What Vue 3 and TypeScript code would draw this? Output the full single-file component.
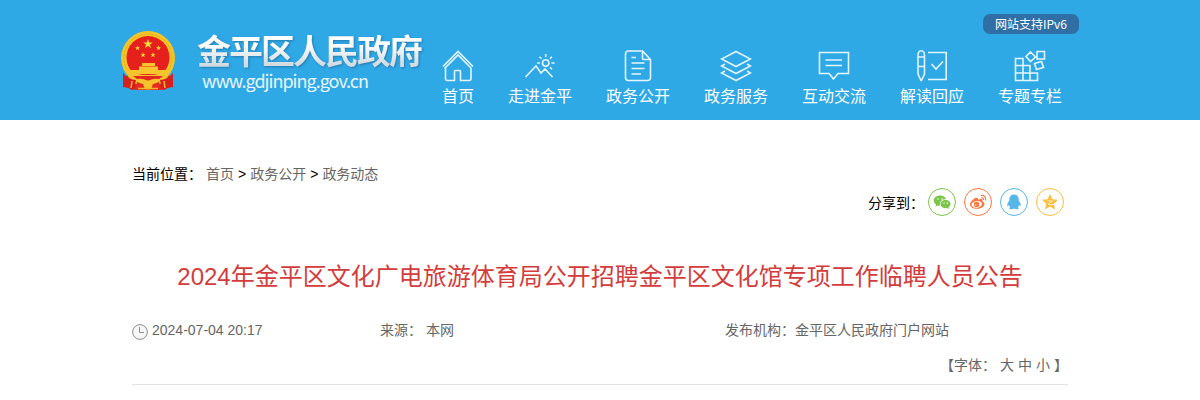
<template>
  <div class="page">
    <header class="header">
      <div class="header-inner">
        <a class="brand">
          <svg class="emblem" viewBox="0 0 56 62" aria-hidden="true">
            <path d="M8 43 L3 55 L12 60 L28 57 L44 60 L53 55 L48 43 Z" fill="#d9201c" />
            <circle cx="28" cy="28" r="27" fill="#f3c526" />
            <circle cx="28" cy="28" r="24" fill="none" stroke="#e3ab22" stroke-width="1" stroke-dasharray="2 1.5" />
            <circle cx="28" cy="27.500" r="21.500" fill="#e6211d" />
            <path v-for="s in stars" :key="s.t" :transform="s.t" :d="starPath" fill="#ffdc3c" />
            <path d="M22 33h13v3H22zM19 36.500h19v4.500H19zM11 40h35v4H11z" fill="#f8c52c" />
            <path d="M6 40 L11 40 Q14 45 28 45 Q42 45 46 40 L50 40 Q48 52 40 54 Q28 57 16 54 Q8 51 6 40 Z" fill="#f6c22f" />
            <path d="M13 46 H43 L39 49 Q33 48 28 51 Q23 48 17 49 Z" fill="#e3261d" />
            <path d="M3 43 Q9 50 16 50 L14 59 L3 57 Z M53 43 Q47 50 40 50 L42 59 L53 57 Z" fill="#d71f1d" />
            <path d="M17 52 L28 56 L39 52 L41 60 H15 Z" fill="#e52a20" />
            <circle cx="28" cy="55" r="4.500" fill="#f5c42a" />
            <path d="M12 51l-1 7M44 51l1 7M18 58.500h20" fill="none" stroke="#f0b928" stroke-width="1.500" />
          </svg>
          <span class="brand-text">
            <strong class="site-name">金平区人民政府</strong>
            <span class="site-url">www.gdjinping.gov.cn</span>
          </span>
        </a>
        <div class="header-right">
          <span class="ipv6">网站支持IPv6</span>
          <nav class="nav">
            <a v-for="item in navs" :key="item.label" class="nav-item">
              <svg class="nav-icon" viewBox="0 0 32 32" aria-hidden="true">
                <path :d="item.icon" />
              </svg>
              <span>{{ item.label }}</span>
            </a>
          </nav>
        </div>
      </div>
    </header>

    <main class="content">
      <div class="crumbs">
        <span class="crumb-label">当前位置：</span>
        <template v-for="(c, i) in crumbs" :key="c">
          <i v-if="i > 0">&gt;</i>
          <a>{{ c }}</a>
        </template>
      </div>

      <div class="share">
        <span class="share-label">分享到：</span>
        <a class="share-btn wechat">
          <svg viewBox="0 0 20 20">
            <path d="M8 3.500C4.500 3.500 1.700 5.700 1.700 8.600c0 1.700.9 3.100 2.400 4l-.6 2 2.300-1.200c.7.200 1.400.3 2.200.3-1-4 2-6.700 6.100-6.500C13.500 5 11 3.500 8 3.500z" />
            <path d="M13.500 8c-2.900 0-5 1.900-5 4.100s2.200 4.100 5 4.100c.6 0 1.100-.1 1.600-.2l1.900 1-.5-1.700c1.200-.8 2-1.900 2-3.200 0-2.300-2.200-4.100-5-4.100z" />
            <g fill="#fff"><circle cx="6" cy="7" r=".8" /><circle cx="10" cy="7" r=".8" /><circle cx="12" cy="11" r=".7" /><circle cx="15.300" cy="11" r=".7" /></g>
          </svg>
        </a>
        <a class="share-btn weibo">
          <svg viewBox="0 0 20 20">
            <path d="M8.200 5.700C5.600 6.300 2 10 2 12.400c0 2.700 3.400 4.300 7 4.300 4.500 0 7.500-2.500 7.500-4.800 0-1.400-1.200-2-2.200-2.300.5-1.400.1-2.200-.9-2.500-1-.2-2.200.2-3.400.7.500-1.500-.2-2.400-1.800-2.100z" />
            <ellipse cx="8.700" cy="12.400" rx="5.200" ry="3.400" fill="#fff" transform="rotate(-7 8.700 12.400)" />
            <circle cx="8.500" cy="12.400" r="2.700" />
            <circle cx="7.700" cy="13" r=".8" fill="#fff" />
            <path d="M13 3.500c3-.5 5.400 2 4.600 5M13.300 5.800c1.500-.2 2.500.8 2.200 2.300" class="wave" />
          </svg>
        </a>
        <a class="share-btn qq">
          <svg viewBox="0 0 20 20">
            <path d="M10 2.500C7 2.500 5.300 4.700 5.300 7.500v1.300C4 10.400 3.100 12 3.300 13.600c.1.900.7.700 1.600-.6.200.9.600 1.600 1.200 2.200-1.100.5-1.300 2 .7 2.100 1.400.1 2.500-.2 3.200-.7.700.5 1.800.8 3.200.7 2-.1 1.800-1.600.7-2.100.6-.6 1-1.300 1.200-2.200.9 1.300 1.500 1.500 1.600.6.200-1.600-.7-3.200-2-4.800V7.500C14.700 4.700 13 2.500 10 2.500z" />
          </svg>
        </a>
        <a class="share-btn qzone">
          <svg viewBox="0 0 20 20">
            <path d="M10 2l2.400 5.200 5.600.6-4.200 3.900 1.200 5.700L10 14.600l-5 2.800 1.200-5.700L2 7.800l5.600-.6z" />
            <path d="M7 9h5.500l-4.300 3.300c2 .4 3.800.4 6 .1" fill="none" stroke="#fff" stroke-width=".7" />
          </svg>
        </a>
      </div>

      <h1 class="title">2024年金平区文化广电旅游体育局公开招聘金平区文化馆专项工作临聘人员公告</h1>

      <div class="meta">
        <span class="time">
          <svg class="clock" viewBox="0 0 16 16" aria-hidden="true">
            <circle cx="8" cy="8" r="7.400" />
            <path d="M7.500 3v5.500H12" />
          </svg>
          2024-07-04 20:17
        </span>
        <span class="source">来源：<em>本网</em></span>
        <span class="publisher">发布机构：金平区人民政府门户网站</span>
      </div>

      <div class="font-size">
        <span class="font-label">【字体：</span>
        <a v-for="s in ['大', '中', '小']" :key="s">{{ s }}</a>
        <span>】</span>
      </div>
    </main>
  </div>
</template>

<script setup lang="ts">
interface NavItem {
  label: string
  icon: string
}

const navs: NavItem[] = [
  {
    label: '首页',
    icon: 'M1 16.500L16 1.500L31 16.500M2.500 18.500L16 5L29.500 18.500M3.500 17.500V28.500Q3.500 30.500 5.500 30.500H12.500V21.500Q12.500 20.500 13.500 20.500H17.500Q18.500 20.500 18.500 21.500V30.500H27Q29 30.500 29 28.500V17.500'
  },
  {
    label: '走进金平',
    icon: 'M1.500 27L12 16L17 23L21 19L28.500 27M18.500 13A3.200 3.200 0 1 0 24.900 13A3.200 3.200 0 1 0 18.500 13M21.700 4V7M21.700 19V21M13 13H16M27.500 13H30.500M15.500 6.800L17.500 8.800M27.900 6.800L25.900 8.800M26 17.200L28 19.200'
  },
  {
    label: '政务公开',
    icon: 'M19.500 1H6.500Q3.500 1 3.500 4V27.500Q3.500 30.500 6.500 30.500H25.500Q28.500 30.500 28.500 27.500V9.500L20.500 1V8.500Q20.500 9.500 21.500 9.500H28.500M9.500 7.500H14M9.500 13H22.500M9.500 18.500H22.500M9.500 24H19'
  },
  {
    label: '政务服务',
    icon: 'M16 1.500L30.500 9L16 16.500L1.500 9ZM5 14L1.500 16L16 23.500L30.500 16L27 14M5 21L1.500 23L16 30.500L30.500 23L27 21'
  },
  {
    label: '互动交流',
    icon: 'M1.500 2.500H30.500V23.500H20L15.500 29L11 23.500H1.500ZM7.500 10H24M7.500 15.500H24'
  },
  {
    label: '解读回应',
    icon: 'M2 6Q2 .8 5.200 .8Q8.500 .8 8.500 6V24L5.500 30.500H5L2 24ZM2 7H8.500M2 16.500H8.500M12 2.500H30.200V29.500H12M15.500 14L20 19L27 11.500'
  },
  {
    label: '专题专栏',
    icon: 'M1.500 8.500H9V30.500H1.500ZM1.500 15.500H16V30.500M1.500 23H23.500V30.500H1.500M23 1.500H30.500V9H23ZM16.500 2L21.500 7L16.500 11.500L12 6.500ZM20.500 13.500L27.500 11.500L29.500 17.500L22.500 19.500Z'
  }
]

const crumbs = ['首页', '政务公开', '政务动态']

const starPath = 'M0-5L1.200-1.500H4.800L1.900.6 3 4 0 1.900-3 4-1.900.6-4.800-1.500H-1.200Z'
const stars = [
  { t: 'translate(28 14)' },
  { t: 'translate(17.500 18) scale(.55)' },
  { t: 'translate(38.500 18) scale(.55)' },
  { t: 'translate(23 25) scale(.55)' },
  { t: 'translate(33 25) scale(.55)' }
]
</script>

<style>
body {
  margin: 0;
  background: #fff;
}
</style>

<style scoped>
.page {
  height: 400px;
  overflow: hidden;
  font: 14px/20px "Liberation Sans", "Noto Sans CJK SC", sans-serif;
  color: #666;
}
.header {
  height: 120px;
  background: #2fa8e6;
}
.header-inner {
  display: flex;
  justify-content: space-between;
  box-sizing: border-box;
  width: 960px;
  margin: 0 auto;
  padding-right: 1px;
}
.brand {
  display: flex;
  padding-top: 30px;
}
.emblem {
  width: 56px;
  height: 62px;
}
.brand-text {
  display: flex;
  flex-direction: column;
  margin-left: 21px;
  white-space: nowrap;
}
.site-name {
  width: 228px;
  margin-right: -4px;
  font: 700 34px/40px "Noto Sans CJK SC", sans-serif;
  letter-spacing: -2px;
  background: linear-gradient(#fff 35%, #d3dce2 85%);
  background-clip: text;
  color: transparent;
  filter: drop-shadow(1px 1px 1px rgba(30, 80, 120, 0.5));
}
.site-url {
  margin: -1px 0 0 5px;
  font: 18px/22px "Noto Sans CJK SC", sans-serif;
  letter-spacing: -1px;
  color: #e6f5fd;
}
.header-right {
  display: flex;
  flex-direction: column;
  align-items: flex-end;
  padding-top: 14px;
}
.ipv6 {
  width: 96px;
  height: 20px;
  border-radius: 7px;
  background: #2f6fa6;
  color: #fff;
  font: 12px/20px "Noto Sans CJK SC", sans-serif;
  text-align: center;
}
.nav {
  display: flex;
  margin-top: 16px;
}
.nav-item {
  display: flex;
  flex-direction: column;
  align-items: center;
  width: 98px;
  color: #fff;
  font: 16px/24px "Noto Sans CJK SC", sans-serif;
}
.nav-item:first-child {
  width: 66px;
}
.nav-icon {
  width: 32px;
  height: 32px;
  margin-bottom: 1px;
  fill: none;
  stroke: #e3f6ff;
  stroke-width: 1.6;
}
.content {
  width: 936px;
  margin: 0 auto;
}
.crumbs {
  display: flex;
  padding-top: 44px;
  color: #000;
}
.crumb-label {
  width: 74px;
}
.crumbs a {
  color: #666;
}
.crumbs i {
  margin: 0 4px;
  font-style: normal;
}
.share {
  display: flex;
  justify-content: flex-end;
  gap: 8px;
  height: 30px;
  margin: 4px 4px 0 0;
  color: #000;
}
.share-label {
  width: 52px;
  line-height: 30px;
  white-space: nowrap;
}
.share-btn {
  display: flex;
  align-items: center;
  justify-content: center;
  box-sizing: border-box;
  width: 28px;
  height: 28px;
  border: 1px solid currentColor;
  border-radius: 50%;
}
.share-btn svg {
  width: 20px;
  height: 20px;
  fill: currentColor;
}
.wechat { color: #7bc549; }
.weibo { color: #ff763b; }
.qq { color: #56b6e7; }
.qzone { color: #fdbe3d; }
.share-btn .wave {
  fill: none;
  stroke: currentColor;
  stroke-width: 1.2;
}
.title {
  margin: 39px 0 0;
  font-size: 24px;
  font-weight: 400;
  line-height: 40px;
  text-align: center;
  white-space: nowrap;
  color: #d43c3c;
}
.meta {
  display: flex;
  margin-top: 23px;
}
.time {
  display: flex;
  gap: 4px;
  width: 248px;
}
.clock {
  width: 16px;
  height: 16px;
  margin-top: 4px;
  fill: #f6f6f6;
  stroke: #8c8c8c;
}
.source {
  width: 345px;
}
.source em {
  margin-left: 4px;
  font-style: normal;
}
.font-size {
  display: flex;
  justify-content: flex-end;
  gap: 4px;
  height: 29px;
  margin-top: 15px;
  border-bottom: 1px solid #e2e2e2;
}
</style>
